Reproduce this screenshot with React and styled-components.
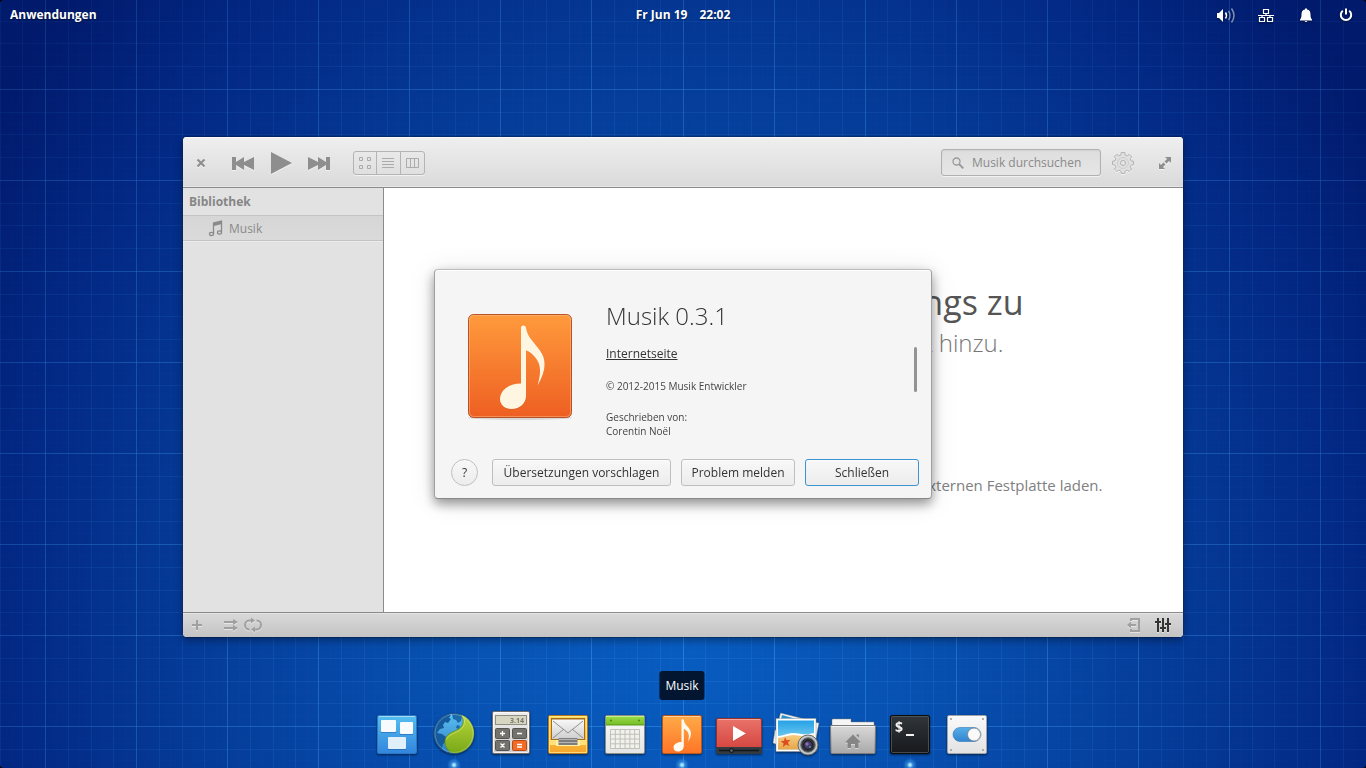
import React from "react";
import styled, { createGlobalStyle, css } from "styled-components";

const GlobalStyle = createGlobalStyle`
  *, *::before, *::after { box-sizing: border-box; }
  body {
    margin: 0;
    background: #000;
    font-family: "Open Sans", "Noto Sans", sans-serif;
    font-size: 12px;
    line-height: 16px;
  }
  button, input { font: inherit; color: inherit; }
  button { padding: 0; border: 0; background: none; cursor: pointer; }
  svg { display: block; }
`;

/* ---------- desktop ---------- */

const Desktop = styled.div`
  position: relative;
  display: flex;
  flex-direction: column;
  min-height: 100vh;
  overflow: hidden;
  border-radius: 4px;
`;

const WallpaperArt = styled.svg`
  position: absolute;
  inset: 0;
  width: 100%;
  height: 100%;
`;

const STEP = 1366 / 120;

function gridLines(level) {
  const out = [];
  const kind = (i) => (i % 8 === 0 ? 2 : i % 2 === 0 ? 1 : 0);
  for (let i = -8; i < 120; i++) {
    if (kind(i) !== level) continue;
    const x = Math.floor(STEP * 4 + i * STEP) + 0.5;
    const y = Math.floor(89.3 + i * STEP) + 0.5;
    out.push(`M${x} 0V768`, `M0 ${y}H1366`);
  }
  return out.join("");
}

function Wallpaper() {
  return (
    <WallpaperArt viewBox="0 0 1366 768" preserveAspectRatio="xMidYMid slice" aria-hidden="true">
      <defs>
        <radialGradient id="sky" gradientUnits="userSpaceOnUse" cx="0" cy="0" r="1" gradientTransform="translate(683 640) scale(820 960)">
          <stop offset="0" stopColor="#085cc0" />
          <stop offset="0.3" stopColor="#0750b0" />
          <stop offset="0.6" stopColor="#053b98" />
          <stop offset="0.85" stopColor="#022681" />
          <stop offset="1" stopColor="#011a6c" />
        </radialGradient>
        <radialGradient id="fade" gradientUnits="userSpaceOnUse" cx="0" cy="0" r="1" gradientTransform="translate(683 600) scale(900 900)">
          <stop offset="0" stopColor="#fff" />
          <stop offset="0.6" stopColor="#aaa" />
          <stop offset="1" stopColor="#666" />
        </radialGradient>
        <mask id="fadeMask" maskUnits="userSpaceOnUse" x="0" y="0" width="1366" height="768">
          <rect width="1366" height="768" fill="url(#fade)" />
        </mask>
      </defs>
      <rect width="1366" height="768" fill="url(#sky)" />
      <g fill="none" stroke="#3f9cf0" mask="url(#fadeMask)">
        <path d={gridLines(0)} strokeOpacity="0.04" />
        <path d={gridLines(1)} strokeOpacity="0.18" />
        <path d={gridLines(2)} strokeOpacity="0.5" />
      </g>
    </WallpaperArt>
  );
}

/* ---------- top panel ---------- */

const Panel = styled.header`
  position: relative;
  display: grid;
  grid-template-columns: 1fr auto 1fr;
  align-items: center;
  height: 30px;
  padding: 0 10px;
  color: #fff;
  font-weight: 700;
  text-shadow: 0 1px 2px rgba(0, 0, 0, 0.5);
`;

const PanelButton = styled.button`
  justify-self: start;
  font-weight: 700;
  text-shadow: inherit;
`;

const Clock = styled.div`
  display: flex;
  gap: 12px;
`;

const Indicators = styled.div`
  display: flex;
  justify-content: flex-end;
  gap: 20px;
`;

const Indicator = styled.button`
  width: 20px;
  height: 20px;
  filter: drop-shadow(0 1px 1px rgba(0, 0, 0, 0.5));
`;

/* ---------- music window ---------- */

const Workspace = styled.main`
  position: relative;
  flex: 1;
  display: flex;
  justify-content: center;
  align-items: flex-end;
  padding: 0 16px 73px;
`;

const Window = styled.section`
  display: flex;
  flex-direction: column;
  width: 100%;
  max-width: 1000px;
  min-height: 500px;
  overflow: hidden;
  border-radius: 4px;
  background: #fff;
  color: #8a8a8a;
  box-shadow: 0 0 0 1px rgba(0, 0, 0, 0.2), 0 3px 8px rgba(0, 0, 0, 0.4);
`;

const Toolbar = styled.header`
  display: flex;
  align-items: center;
  height: 51px;
  padding: 2px 12px 0;
  border-bottom: 1px solid #8b8b8b;
  background: linear-gradient(#efefef, #dadada);
  box-shadow: inset 0 1px #f8f8f8, inset 0 -1px #e6e6e6;
`;

const ToolButton = styled.button`
  display: grid;
  place-items: center;
  width: ${(p) => p.$width || 24}px;
  height: 24px;
  color: ${(p) => p.$color || "#8e8e8e"};
  filter: drop-shadow(0 1px 0 rgba(255, 255, 255, 0.6));
`;

const Transport = styled.div`
  display: flex;
  gap: 14px;
  margin: 0 22px 0 24px;
`;

const ViewSwitch = styled.div`
  display: flex;
  height: 24px;
  border: 1px solid #b4b4b4;
  border-radius: 3px;
  box-shadow: 0 1px rgba(255, 255, 255, 0.6);
`;

const ViewButton = styled.button`
  display: grid;
  place-items: center;
  width: 24px;
  color: #ababab;
  & + & { border-left: 1px solid #b4b4b4; }
  &:first-child { width: 22px; }
`;

const SearchBox = styled.label`
  display: flex;
  align-items: center;
  gap: 8px;
  width: 160px;
  height: 27px;
  margin: 0 10px 1px auto;
  padding: 0 10px;
  border: 1px solid #b0b0b0;
  border-radius: 3px;
  background: linear-gradient(#dedede, #e6e6e6);
  box-shadow: inset 0 1px 2px rgba(0, 0, 0, 0.06), 0 1px rgba(255, 255, 255, 0.6);
`;

const SearchInput = styled.input`
  flex: 1;
  min-width: 0;
  padding: 0;
  border: 0;
  outline: 0;
  background: none;
  &::placeholder { color: #8a8a8a; opacity: 1; }
`;

const RightTools = styled.div`
  display: flex;
  gap: 24px;
`;

const Body = styled.div`
  flex: 1;
  display: flex;
`;

const Sidebar = styled.nav`
  width: 201px;
  border-right: 1px solid #8b8b8b;
  background: #e2e2e2;
`;

const SidebarTitle = styled.h2`
  margin: 0;
  padding: 6px 6px 5px;
  font-size: 12px;
  line-height: 16px;
  color: #868686;
`;

const SidebarItem = styled.a`
  display: flex;
  align-items: center;
  gap: 4px;
  height: 26px;
  padding: 1px 0 0 25px;
  border: solid #c4c4c4;
  border-width: 1px 0;
  background: linear-gradient(#d6d6d6, #dadada);
  box-shadow: 0 1px #ebebeb;
  color: #8a8a8a;
  text-decoration: none;
`;

const Welcome = styled.div`
  flex: 1;
  display: flex;
  flex-direction: column;
  align-items: center;
  padding-top: 90px;
  text-align: right;
  white-space: nowrap;
`;

const WelcomeTitle = styled.h1`
  width: 480px;
  margin: 0;
  font-size: 34px;
  font-weight: 400;
  line-height: 48px;
  color: #555;
`;

const WelcomeText = styled.p`
  width: 440px;
  margin: 0;
  font-size: 24px;
  font-weight: 300;
  line-height: 34px;
  color: #777;
`;

const WelcomeAction = styled.button`
  width: 638px;
  margin-top: 114px;
  font-size: 15px;
  line-height: 22px;
  text-align: right;
  color: #808080;
`;

const StatusBar = styled.footer`
  display: flex;
  align-items: center;
  height: 25px;
  padding: 0 11px 0 6px;
  border-top: 1px solid #8b8b8b;
  background: linear-gradient(#d9d9d9, #c4c4c4);
  box-shadow: inset 0 1px #e4e4e4;
`;

const StatusGroup = styled.div`
  display: flex;
  gap: ${(p) => p.$gap}px;
  margin-left: ${(p) => p.$push};
`;

const StatusButton = styled.button`
  width: 18px;
  height: 16px;
  color: ${(p) => (p.$active ? "#333" : "#a0a0a0")};
  filter: drop-shadow(0 1px 0 rgba(255, 255, 255, 0.5));
`;

/* ---------- about dialog ---------- */

const DialogLayer = styled.div`
  position: fixed;
  inset: 0;
  display: grid;
  place-items: center;
  pointer-events: none;
`;

const Dialog = styled.section`
  width: 498px;
  padding: 0 12px 12px 16px;
  border: 1px solid #aaa;
  border-color: #bdbdbd #a0a0a0 #888;
  border-radius: 4px;
  background: #f5f5f5;
  box-shadow: inset 0 1px #fff, 0 5px 12px rgba(0, 0, 0, 0.4), 0 2px 28px rgba(0, 0, 0, 0.1);
  color: #333;
  pointer-events: auto;
`;

const DialogBody = styled.div`
  display: flex;
  height: 189px;
`;

const AppIcon = styled.svg`
  flex: none;
  width: 112px;
  height: 112px;
  margin: 40px 30px 0 13px;
`;

const Details = styled.div`
  flex: 1;
  padding-top: 30px;
  font-size: 10px;
  line-height: 14px;
  color: #444;
`;

const AppName = styled.h1`
  margin: 0 0 14px;
  font-size: 24px;
  font-weight: 300;
  line-height: 32px;
  color: #333;
`;

const SiteLink = styled.a`
  display: block;
  margin-bottom: 17px;
  font-size: 12px;
  line-height: 16px;
  color: #333;
`;

const Paragraph = styled.p`
  margin: 0 0 17px;
`;

const ScrollThumb = styled.div`
  width: 3px;
  height: 45px;
  margin: 77px 2px 0 0;
  border-radius: 2px;
  background: #939393;
`;

const Actions = styled.footer`
  display: flex;
  gap: 10px;
`;

const DialogButton = styled.button`
  height: 27px;
  min-width: ${(p) => p.$width || 27}px;
  border: 1px solid #bfbfbf;
  border-radius: 3px;
  background: linear-gradient(#f8f8f8, #ececec);
  box-shadow: inset 0 1px rgba(255, 255, 255, 0.6);
  ${(p) => p.$primary && css`border-color: #3c93d2;`}
  ${(p) => p.$round && css`
    margin-right: 4px;
    border-radius: 50%;
    font-weight: 500;
    color: #333;
  `}
`;

/* ---------- dock ---------- */

const Dock = styled.nav`
  position: relative;
  display: flex;
  justify-content: center;
  gap: 9px;
  padding: 0 2px 10px 0;
`;

const DockItem = styled.button`
  position: relative;
  width: 48px;
  height: 48px;
`;

const DockArt = styled.svg`
  width: 48px;
  height: 48px;
  overflow: visible;
  filter: drop-shadow(0 1px 1px rgba(0, 0, 0, 0.55));
`;

const Glow = styled.span`
  position: absolute;
  left: 16px;
  bottom: -15px;
  width: 16px;
  height: 16px;
  border-radius: 50%;
  background: radial-gradient(circle, #a8e4ff 0 1px, rgba(90, 190, 255, 0.45) 3px, rgba(60, 160, 255, 0) 7px);
`;

const Tooltip = styled.span`
  position: absolute;
  left: 50%;
  bottom: 58px;
  transform: translateX(-50%);
  padding: 7px 6px 6px;
  border-radius: 3px;
  background: rgba(2, 16, 38, 0.92);
  color: #fff;
`;

/* ---------- small drawings ---------- */

const Icon = ({ w, h = w, children, ...rest }) => (
  <svg width={w} height={h} viewBox={`0 0 ${w} ${h}`} fill="currentColor" aria-hidden="true" {...rest}>
    {children}
  </svg>
);

const grad = (id, a, b) => (
  <linearGradient id={id} x1="0" y1="0" x2="0" y2="1">
    <stop offset="0" stopColor={a} />
    <stop offset="1" stopColor={b} />
  </linearGradient>
);

function AboutArt() {
  return (
    <AppIcon viewBox="0 0 112 112" aria-hidden="true">
      <defs>{grad("tileLarge", "#ff9a3c", "#ee5f22")}</defs>
      <ellipse cx="56" cy="107.500" rx="52" ry="2.500" fill="#000" opacity="0.12" />
      <rect x="4.500" y="4.500" width="103" height="103" rx="5" fill="url(#tileLarge)" stroke="#b8512a" />
      <rect x="5.500" y="5.500" width="101" height="101" rx="4" fill="none" stroke="#ffc58a" strokeOpacity="0.45" />
      <path
        d="M57 18.500c0-3.500 4.500-3.500 5 0 1.500 9.500 9 14.500 14.500 22.500 6 9 6.500 19-3.500 34.500 5-14 4.500-22-2.500-29.500-3-3-5.500-4.500-8.500-5.500V87c0 7-6 12.500-14.500 12.500-7 0-11.500-4.500-11.500-10.500 0-8 8-15 21-15z"
        fill="#b04510"
        opacity="0.3"
      />
      <path
        d="M57 18c0-3.200 4.500-3.200 5 0 1.500 9.500 8.500 14.500 14 22.500 6.500 9 6.500 20-2.500 35 4-14 3.500-22-3-29-3-3.500-5.500-5-8.500-6V86c0 7-6 13-14.500 13C41 99 36 95 36 89c0-8 8-15.500 21-15.500z"
        fill="#fff6e2"
      />
    </AppIcon>
  );
}

const Tile = ({ fill, stroke }) => (
  <>
    <rect x="4.500" y="5.500" width="39" height="38" rx="1.500" fill={fill} stroke={stroke} />
    <path d="M6 6.500H42" stroke="#fff" strokeOpacity="0.45" />
  </>
);

const dockArt = {
  workspaces: (
    <>
      <defs>{grad("dWork", "#55bff0", "#3285dd")}</defs>
      <Tile fill="url(#dWork)" stroke="#2d77c4" />
      <g fill="#1c5c9e" opacity="0.5">
        <rect x="8" y="11" width="15" height="12" />
        <rect x="27" y="13" width="13" height="12" />
        <rect x="15" y="28" width="18" height="12" />
      </g>
      <g fill="#f7fbfd">
        <rect x="8" y="10" width="15" height="12" rx="1" />
        <rect x="27" y="12" width="13" height="12" rx="1" />
        <rect x="15" y="27" width="18" height="12" rx="1" fill="#dff0fb" />
      </g>
    </>
  ),
  browser: (
    <>
      <defs>
        {grad("dSea", "#5cc0f2", "#2c7fc4")}
        {grad("dLeaf", "#bcd83c", "#78a818")}
        <clipPath id="globeClip"><circle cx="24" cy="23.500" r="20" /></clipPath>
      </defs>
      <circle cx="24" cy="23.500" r="20" fill="url(#dSea)" stroke="#23577f" />
      <g clipPath="url(#globeClip)">
        <path d="M8 10l5-3 4-3 4 1-2 3 2 1-3 4-3-1-2 3 1 3-4 1-3 4 5 1 4 3 1 4-4 3-1 4 2 4-5-3-5-7-2-9 3-9z" fill="#155a9c" />
        <path d="M22 4l5-1 5 3-1 5-3 2-2-3-3-1zM27 15l3 1-1 3-3-1z" fill="#1c69ab" />
        <path d="M30 3c5 6 4 13-2 16.500-6 3-12 4.500-13 11-.6 5 2 9 6 12 12 3 25-6 25-19.500C46 13 39 5 30 3z" fill="url(#dLeaf)" stroke="#5d8a12" strokeWidth="0.700" />
        <path d="M32.500 5.500c4 6 2 12-4 15.500-5 2.500-10 4-12 8.500" fill="none" stroke="#dcec7c" strokeOpacity="0.600" />
      </g>
      <circle cx="24" cy="23.500" r="19" fill="none" stroke="#fff" strokeOpacity="0.250" />
    </>
  ),
  calculator: (
    <>
      <defs>{grad("dCalc", "#efefef", "#cfcfcf")}</defs>
      <rect x="5.500" y="1.500" width="37" height="42" rx="1.500" fill="url(#dCalc)" stroke="#6e6e6e" />
      <rect x="6.500" y="2.500" width="35" height="40" rx="1" fill="none" stroke="#fff" strokeOpacity="0.700" />
      <rect x="8.500" y="5.500" width="31" height="9" fill="#d6d6c2" stroke="#8e8d80" />
      <text x="37" y="13" textAnchor="end" fontFamily="Open Sans" fontWeight="700" fontSize="7" fill="#77766a">3.14</text>
      <g stroke="#555450" fill="#73726c">
        <rect x="8.500" y="18.500" width="14" height="10" rx="1" />
        <rect x="25.500" y="18.500" width="14" height="10" rx="1" />
        <rect x="8.500" y="30.500" width="14" height="10" rx="1" />
        <rect x="25.500" y="30.500" width="14" height="10" rx="1" fill="#f26b27" stroke="#b84a18" />
      </g>
      <path d="M13 23.500h5M15.500 21v5M30 23.500h5M13.500 33.500l4 4M17.500 33.500l-4 4M30 34.500h5M30 37h5" stroke="#fff" strokeWidth="1.300" />
    </>
  ),
  mail: (
    <>
      <defs>{grad("dMail", "#ffda5e", "#f5a62a")}{grad("dEnv", "#f8f8f8", "#cfcfcf")}</defs>
      <rect x="4.500" y="5.500" width="39" height="38" rx="1.500" fill="url(#dMail)" stroke="#b8771c" />
      <path d="M5.500 6.500h37v36h-37z" fill="none" stroke="#fff0a0" strokeOpacity="0.700" />
      <path d="M7 8h34v22H7z" fill="#a86c18" />
      <rect x="8" y="9.500" width="32" height="19.500" fill="url(#dEnv)" />
      <path d="M9 11l15 12 15-12M9 28l11-9M39 28l-11-9" fill="none" stroke="#8f8f8f" />
      <path d="M5 30h37.500v5H5z" fill="#ffe27c" />
      <path d="M12 30h24v6H12z" fill="#fff0a8" />
      <path d="M14.500 28h19v7h-19z" fill="#7d7d7d" />
      <path d="M15 29.500h18M15 32.500h18" stroke="#b5b5b5" />
    </>
  ),
  calendar: (
    <>
      <defs>{grad("dCal", "#fafafa", "#e4e4e4")}{grad("dCalTop", "#9bdc4a", "#73bd24")}</defs>
      <rect x="4.500" y="5.500" width="39" height="38" rx="1.500" fill="url(#dCal)" stroke="#8a8f86" />
      <path d="M5 6h38v9H5z" fill="url(#dCalTop)" />
      <path d="M5 6.500h38" stroke="#c5f08c" />
      <path d="M5 15h38" stroke="#5b9a18" />
      <circle cx="10" cy="10.500" r="1" fill="#4c8414" />
      <circle cx="38" cy="10.500" r="1" fill="#4c8414" />
      <path d="M9.500 19.500h29v19h-29zM9.500 24.300h29M9.500 29h29M9.500 33.800h29M14.300 19.500v19M19.200 19.500v19M24 19.500v19M28.900 19.500v19M33.700 19.500v19" fill="#f1f1ed" stroke="#c0c0b8" />
    </>
  ),
  music: (
    <>
      <defs>{grad("dMusic", "#ffab47", "#ff7426")}</defs>
      <Tile fill="url(#dMusic)" stroke="#b8561c" />
      <path
        d="M23.500 10c.2-1.500 2-1.500 2.300 0 .5 4 3.500 5.500 5.700 9 2.200 3.500 2 7.500-1.500 12.500 1.500-5.500 1-8.500-1.500-11-1-1-2-1.500-2.700-1.800V36c0 3-2.300 5.500-5.800 5.500-2.700 0-4.500-1.500-4.500-4 0-3 3-5.500 8-5.500z"
        fill="#fff9ef"
      />
    </>
  ),
  videos: (
    <>
      <defs>{grad("dVid", "#e8736a", "#d23f3a")}</defs>
      <rect x="1.500" y="8.500" width="45" height="35" rx="1.500" fill="url(#dVid)" stroke="#97302c" />
      <path d="M3 9.500h42" stroke="#f4a79e" />
      <path d="M1 37h46v6a1 1 0 0 1-1 1H2a1 1 0 0 1-1-1z" fill="#333b40" />
      <path d="M4 40.500h40" stroke="#131719" strokeWidth="1.500" />
      <circle cx="16.500" cy="40.500" r="2" fill="#50595f" stroke="#111" />
      <path d="M18 16.500v15l13-7.500z" fill="#8d1f1b" opacity="0.5" />
      <path d="M18 16v15l13-7.500z" fill="#fff" />
    </>
  ),
  photos: (
    <>
      <defs>{grad("dSky", "#25a1e6", "#a4e6f5")}{grad("dSand", "#f7cf83", "#e8a548")}</defs>
      <path d="M8.500 3l24 6-2 8-24-6zM47 13l-4 20-6-3 3-18zM3 20l6 2-3 13-5-2z" fill="#f4f4f4" stroke="#7b8a94" strokeWidth="0.500" />
      <path d="M10 5l18 5-1 4-18-5z" fill="#2c90c8" />
      <rect x="4" y="8.500" width="40" height="33" fill="#fff" stroke="#8c969c" strokeWidth="0.500" />
      <rect x="6" y="10.500" width="36" height="29" fill="url(#dSky)" />
      <path d="M6 27c5 0 9-3 15-3 7 0 13 3 21 0v15.500H6z" fill="url(#dSand)" />
      <path d="M6 27c5 0 9-3 15-3 7 0 13 3 21 0" fill="none" stroke="#fff" strokeWidth="2" />
      <path d="M13 27l1.500 3.300 4-.3-2.700 2.600 1.700 3.400-3.500-1.500-3 2.500.5-3.700-3-2 3.600-.6z" fill="#dd4b1e" />
      <circle cx="36" cy="35" r="10" fill="#c3c7c9" stroke="#62686b" />
      <circle cx="36" cy="35" r="7.300" fill="#33373c" stroke="#777d80" />
      <circle cx="36" cy="35" r="4.300" fill="#463d66" stroke="#17191d" />
      <circle cx="35" cy="34" r="1.700" fill="#876fb2" />
      <circle cx="38" cy="37" r="1" fill="#4e96b5" />
    </>
  ),
  files: (
    <>
      <defs>{grad("dFold", "#d9d9d9", "#a9a9a9")}</defs>
      <path d="M4 9h18v3h23v10H3V10a1 1 0 0 1 1-1z" fill="#f5f5f5" stroke="#8a8a8a" strokeWidth="0.500" />
      <path d="M2 15.500h44a.5.5 0 0 1 .5.500l-.5 26.500a1 1 0 0 1-1 1H3a1 1 0 0 1-1-1L1.500 16a.5.5 0 0 1 .500-.5z" fill="url(#dFold)" stroke="#7c7c7c" />
      <path d="M2.500 16.500h43" stroke="#f2f2f2" />
      <path d="M24 25.500l8 8h-2.500V39H26v-4h-4v4h-3.500v-5H16z" fill="#f2f2f2" opacity="0.5" />
      <path d="M24 24.500l8 8h-2.500V38H26v-4h-4v4h-3.500v-5.500H16zM27.500 24.500h2.500v3l-2.500-2z" fill="#858585" />
    </>
  ),
  terminal: (
    <>
      <defs>{grad("dTerm", "#31363a", "#17191c")}</defs>
      <rect x="4.500" y="5.500" width="39" height="38" rx="1.500" fill="url(#dTerm)" stroke="#0b0c0e" />
      <rect x="5.500" y="6.500" width="37" height="36" rx="1" fill="none" stroke="#5a6066" strokeOpacity="0.7" />
      <text x="9" y="22" fontFamily="Noto Sans" fontWeight="700" fontSize="14" fill="#f2f2f2">$</text>
      <path d="M20 25h8" stroke="#f2f2f2" strokeWidth="2" />
    </>
  ),
  settings: (
    <>
      <defs>{grad("dSet", "#fafafa", "#e2e2e2")}{grad("dSw", "#57aee8", "#3384cf")}</defs>
      <rect x="4.500" y="5.500" width="39" height="38" rx="1.500" fill="url(#dSet)" stroke="#a0a4a8" />
      <g fill="#9a9a9a">
        <circle cx="8" cy="9" r="1" /><circle cx="40" cy="9" r="1" />
        <circle cx="8" cy="40" r="1" /><circle cx="40" cy="40" r="1" />
      </g>
      <rect x="10" y="17.500" width="28" height="14" rx="7" fill="url(#dSw)" stroke="#3478b5" strokeWidth="0.600" />
      <path d="M31 18h1a6.500 6.500 0 0 1 0 13h-1z" fill="#d5d5d5" />
      <circle cx="31" cy="24.500" r="6.500" fill="#fafafa" stroke="#6d7f8e" strokeWidth="0.800" />
    </>
  ),
};

const dockItems = [
  { id: "workspaces", name: "Arbeitsflächen" },
  { id: "browser", name: "Internet", running: true },
  { id: "calculator", name: "Taschenrechner" },
  { id: "mail", name: "E-Mail" },
  { id: "calendar", name: "Kalender" },
  { id: "music", name: "Musik", running: true, hovered: true },
  { id: "videos", name: "Videos" },
  { id: "photos", name: "Fotos" },
  { id: "files", name: "Dateien" },
  { id: "terminal", name: "Terminal", running: true },
  { id: "settings", name: "Systemeinstellungen" },
];

const GEAR = Array.from({ length: 8 }, (_, i) => {
  const at = (deg, r) => {
    const a = ((i * 45 + deg - 90) * Math.PI) / 180;
    return `${(12 + r * Math.cos(a)).toFixed(2)} ${(12 + r * Math.sin(a)).toFixed(2)}`;
  };
  return `${i ? "L" : "M"}${at(-14, 8.4)}L${at(-10, 10.6)}L${at(10, 10.6)}L${at(14, 8.4)}`;
}).join("") + "Z";

export default function App() {
  return (
    <>
      <GlobalStyle />
      <Desktop>
        <Wallpaper />

        <Panel>
          <PanelButton>Anwendungen</PanelButton>
          <Clock>
            <span>Fr Jun 19</span>
            <span>22:02</span>
          </Clock>
          <Indicators>
            <Indicator aria-label="Lautstärke">
              <Icon w={20}>
                <path d="M1 8h2l4-4v13l-4-4H1z" />
                <g fill="none" stroke="currentColor" strokeWidth="1.500">
                  <path d="M9.500 7.500q2 3 0 6" />
                  <path d="M12.500 6q3 4.500 0 9" strokeOpacity="0.500" />
                  <path d="M15.500 3.500q5 7 0 14" strokeOpacity="0.500" />
                </g>
              </Icon>
            </Indicator>
            <Indicator aria-label="Netzwerk">
              <Icon w={20} fill="none" stroke="currentColor">
                <path d="M7.500 4.500h5v4h-5zM3.500 12.500h5v4h-5zM11.500 12.500h5v4h-5zM10 8.500v2M2 10.500h16M6 10.500v2M14 10.500v2" strokeWidth="1.200" />
              </Icon>
            </Indicator>
            <Indicator aria-label="Benachrichtigungen">
              <Icon w={20}>
                <path d="M9 3.500h2v1c2.500.5 3.500 2 3.500 5 0 2.500.5 4 1.500 5v1H4v-1c1-1 1.500-2.500 1.500-5 0-3 1-4.500 3.500-5zM8.500 16h3l-1.500 1.200z" />
              </Icon>
            </Indicator>
            <Indicator aria-label="Ausschalten">
              <Icon w={20} fill="none" stroke="currentColor" strokeWidth="2">
                <path d="M6.800 5.800a5.200 5.200 0 1 0 6.400 0M10 3.500v6" />
              </Icon>
            </Indicator>
          </Indicators>
        </Panel>

        <Workspace>
          <Window aria-label="Musik">
            <Toolbar>
              <ToolButton $width={12} aria-label="Schließen">
                <Icon w={12}><path d="M2.500 2.500l7 7M9.500 2.500l-7 7" stroke="currentColor" strokeWidth="2.200" /></Icon>
              </ToolButton>
              <Transport>
                <ToolButton aria-label="Vorheriger Titel">
                  <Icon w={24}><path d="M1 6h4v5l8-5v5l10-5v13l-10-5v5l-8-5v5H1z" /></Icon>
                </ToolButton>
                <ToolButton aria-label="Wiedergabe">
                  <Icon w={24}><path d="M2 1v22l21-11z" /></Icon>
                </ToolButton>
                <ToolButton aria-label="Nächster Titel">
                  <Icon w={24}><path d="M23 6h-4v5l-8-5v5L1 6v13l10-5v5l8-5v5h4z" /></Icon>
                </ToolButton>
              </Transport>
              <ViewSwitch>
                <ViewButton aria-label="Rasteransicht">
                  <Icon w={14} fill="none" stroke="currentColor"><path d="M1.500 1.500h3v3h-3zM9.500 1.500h3v3h-3zM1.500 9.500h3v3h-3zM9.500 9.500h3v3h-3z" /></Icon>
                </ViewButton>
                <ViewButton aria-label="Listenansicht">
                  <Icon w={13} h={12} fill="none" stroke="currentColor"><path d="M0 1.500h12M0 4.500h12M0 7.500h12M0 10.500h12" /></Icon>
                </ViewButton>
                <ViewButton aria-label="Spaltenansicht">
                  <Icon w={13} h={12} fill="none" stroke="currentColor"><path d="M.5 1.500h12v9H.5zM4.500 1.500v9M8.500 1.500v9" /></Icon>
                </ViewButton>
              </ViewSwitch>
              <SearchBox>
                <Icon w={12} fill="none" stroke="#999">
                  <circle cx="4.500" cy="4.500" r="3.500" strokeWidth="1.300" />
                  <path d="M7 7l4.300 4.300" strokeWidth="1.800" />
                </Icon>
                <SearchInput type="text" placeholder="Musik durchsuchen" aria-label="Musik durchsuchen" />
              </SearchBox>
              <RightTools>
                <ToolButton aria-label="Menü" $color="#b2b2b2">
                  <Icon w={24} fill="none" stroke="currentColor">
                    <path d={GEAR} fill="#e0e0e0" strokeLinejoin="round" />
                    <circle cx="12" cy="12" r="5.500" strokeOpacity="0.400" />
                    <circle cx="12" cy="12" r="2.500" fill="#e6e6e6" />
                  </Icon>
                </ToolButton>
                <ToolButton $width={12} aria-label="Maximieren">
                  <Icon w={12}>
                    <path d="M6 0h6v6l-2-2-2.500 2.500-2-2L8 2zM0 6l2 2 2.500-2.500 2 2L4 10l2 2H0z" />
                  </Icon>
                </ToolButton>
              </RightTools>
            </Toolbar>

            <Body>
              <Sidebar>
                <SidebarTitle>Bibliothek</SidebarTitle>
                <SidebarItem href="#musik">
                  <Icon w={17} fill="none" stroke="currentColor">
                    <path d="M5.500 13.500V3l8-2v11" strokeWidth="1.300" />
                    <path d="M5.500 4.500l8-2" strokeWidth="3" />
                    <ellipse cx="3.500" cy="14" rx="2" ry="1.600" strokeWidth="1.300" />
                    <ellipse cx="11.500" cy="12.500" rx="2" ry="1.600" strokeWidth="1.300" />
                  </Icon>
                  Musik
                </SidebarItem>
              </Sidebar>
              <Welcome>
                <WelcomeTitle>Songs zu</WelcomeTitle>
                <WelcomeText>Musik hinzu.</WelcomeText>
                <WelcomeAction>externen Festplatte laden.</WelcomeAction>
              </Welcome>
            </Body>

            <StatusBar>
              <StatusGroup $gap={16}>
                <StatusButton aria-label="Wiedergabeliste hinzufügen">
                  <Icon w={16}><path d="M7 3h2v4h4v2H9v4H7V9H3V7h4z" /></Icon>
                </StatusButton>
                <StatusGroup $gap={3}>
                  <StatusButton aria-label="Zufallswiedergabe">
                    <Icon w={18} h={16}><path d="M1 4h9V2l5 3-5 3V6H1zM1 10h9V8l5 3-5 3v-2H1z" /></Icon>
                  </StatusButton>
                  <StatusButton aria-label="Wiederholen">
                    <Icon w={18} h={16}>
                      <path d="M7.500 3.500H5.500a4.200 4.200 0 0 0 0 9M10.500 12.500h2a4.200 4.200 0 0 0 0-9" fill="none" stroke="currentColor" strokeWidth="2" />
                      <path d="M7 .5l4 3-4 3zM11 9.500l-4 3 4 3z" />
                    </Icon>
                  </StatusButton>
                </StatusGroup>
              </StatusGroup>
              <StatusGroup $gap={10} $push="auto">
                <StatusButton aria-label="Seitenleiste">
                  <Icon w={18} h={16}>
                    <path d="M5 4V2h8v12H5v-2" fill="none" stroke="currentColor" strokeWidth="2" />
                    <path d="M1 8l4-3.500V7h5v2H5v2.500z" />
                  </Icon>
                </StatusButton>
                <StatusButton $active aria-label="Equalizer">
                  <Icon w={18} h={16}>
                    <path d="M3 1h2v14H3zM8 1h2v14H8zM13 1h2v14h-2zM1 4h6v2H1zM6 10h6v2H6zM11 6h6v2h-6z" />
                  </Icon>
                </StatusButton>
              </StatusGroup>
            </StatusBar>
          </Window>
        </Workspace>

        <Dock aria-label="Dock">
          {dockItems.map((item) => (
            <DockItem key={item.id} aria-label={item.name}>
              <DockArt viewBox="0 0 48 48" aria-hidden="true">{dockArt[item.id]}</DockArt>
              {item.running && <Glow />}
              {item.hovered && <Tooltip>{item.name}</Tooltip>}
            </DockItem>
          ))}
        </Dock>

        <DialogLayer>
          <Dialog role="dialog" aria-label="Info zu Musik">
            <DialogBody>
              <AboutArt />
              <Details>
                <AppName>Musik 0.3.1</AppName>
                <SiteLink href="#internetseite">Internetseite</SiteLink>
                <Paragraph>© 2012-2015 Musik Entwickler</Paragraph>
                <Paragraph>
                  Geschrieben von:
                  <br />
                  Corentin Noël
                </Paragraph>
              </Details>
              <ScrollThumb />
            </DialogBody>
            <Actions>
              <DialogButton $round aria-label="Hilfe">?</DialogButton>
              <DialogButton $width={179}>Übersetzungen vorschlagen</DialogButton>
              <DialogButton $width={114}>Problem melden</DialogButton>
              <DialogButton $width={114} $primary>Schließen</DialogButton>
            </Actions>
          </Dialog>
        </DialogLayer>
      </Desktop>
    </>
  );
}
